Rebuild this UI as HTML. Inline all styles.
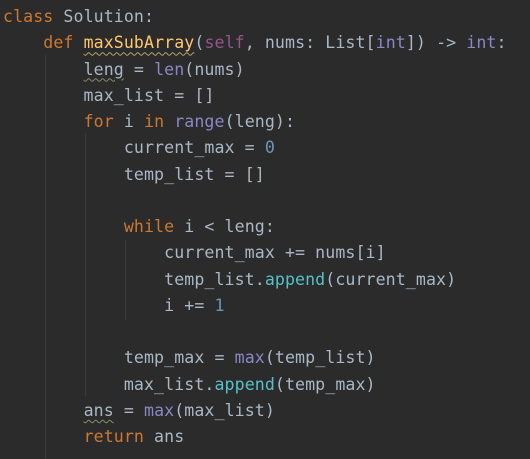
<!DOCTYPE html>
<html><head><style>
html,body{margin:0;padding:0;background:#2b2b2b;width:530px;height:459px;overflow:hidden;}
#c{position:absolute;left:3px;top:4px;font-family:"DejaVu Sans Mono","Liberation Mono",monospace;font-size:16.6px;letter-spacing:0.08px;color:#a9b7c6;}
.l{height:26.25px;line-height:26.25px;white-space:pre;}
.k{color:#cc7832}.f{color:#ffc66d;text-decoration:underline wavy #b3a46c;text-decoration-thickness:1px;text-underline-offset:3px}
.s{color:#94558d}.b{color:#8888c6}.n{color:#6897bb}.m{color:#56c1c9}
.w{text-decoration:underline wavy #8a8a6a;text-decoration-thickness:1px;text-underline-offset:3px}
.g{position:absolute;width:1px;background:#3b3b3b;}
</style></head><body>
<div class="g" style="left:45px;top:55px;height:404px"></div>
<div class="g" style="left:85px;top:133px;height:263px"></div>
<div class="g" style="left:125px;top:240px;height:80px"></div>
<div id="c"><div class="l"><span class="k">class</span> Solution:</div><div class="l">    <span class="k">def</span> <span class="f">maxSubArray</span>(<span class="s">self</span>, nums: List[<span class="b">int</span>]) -&gt; <span class="b">int</span>:</div><div class="l">        <span class="w">leng</span> = <span class="b">len</span>(nums)</div><div class="l">        max_list = []</div><div class="l">        <span class="k">for</span> i <span class="k">in</span> <span class="b">range</span>(leng):</div><div class="l">            current_max = <span class="n">0</span></div><div class="l">            temp_list = []</div><div class="l"> </div><div class="l">            <span class="k">while</span> i &lt; leng:</div><div class="l">                current_max += nums[i]</div><div class="l">                temp_list.<span class="m">append</span>(current_max)</div><div class="l">                i += <span class="n">1</span></div><div class="l"> </div><div class="l">            temp_max = <span class="b">max</span>(temp_list)</div><div class="l">            max_list.<span class="m">append</span>(temp_max)</div><div class="l">        <span class="w">ans</span> = <span class="b">max</span>(max_list)</div><div class="l">        <span class="k">return</span> ans</div></div>
</body></html>
